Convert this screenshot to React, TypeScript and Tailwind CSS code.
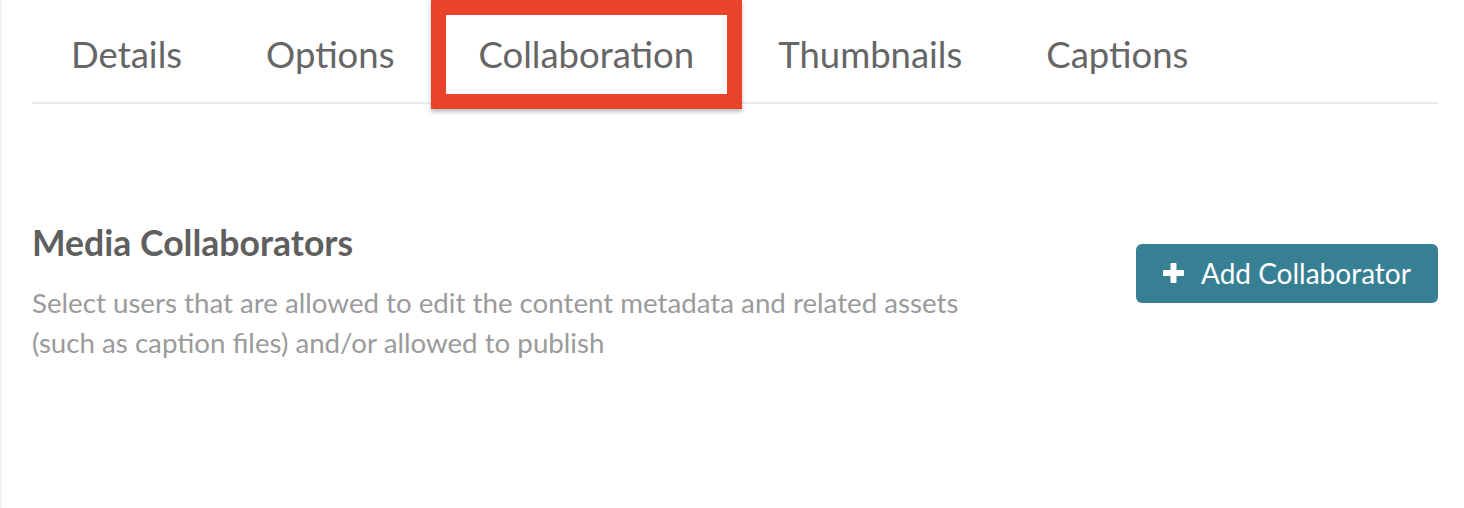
import React from 'react';

const tabs = ['Details', 'Options', 'Collaboration', 'Thumbnails', 'Captions'];

const App: React.FC = () => {
  const active = 'Collaboration';

  return (
    <div className="w-[1464px] h-[508px] bg-white border-l-2 border-[#f4f4f4] pl-[30px] pr-[26px] font-['Lato',sans-serif] overflow-hidden">
      {/* Tabs */}
      <div className="flex gap-[84px] pl-[39px] border-b-2 border-[#ebebeb]">
        {tabs.map((tab) => (
          <div key={tab} className="relative pt-[33px] pb-[25px]">
            <span className="block text-[36.5px] leading-[1.2] text-[#666666] whitespace-nowrap">{tab}</span>
            {tab === active && (
              <div className="absolute left-[-48px] right-[-48px] top-0 h-[109px] border-[15px] border-[#e9432a] shadow-[0_3px_4px_rgba(0,0,0,0.25)]" />
            )}
          </div>
        ))}
      </div>

      {/* Collaborators section */}
      <div className="flex items-start justify-between pt-[118px]">
        <div>
          <h2 className="text-[35.6px] leading-[1.2] font-bold text-[#5f5f5f]">Media Collaborators</h2>
          <p className="mt-[18px] text-[27.7px] leading-[40px] text-[#9b9b9b] w-[960px]">
            Select users that are allowed to edit the content metadata and related assets
            <br />
            (such as caption files) and/or allowed to publish
          </p>
        </div>
        <button className="mt-[22px] flex items-center gap-[17px] h-[59px] w-[302px] pl-[27px] rounded-[6px] bg-[#377f93] text-white text-[28px] leading-none">
          <svg width="21" height="20" viewBox="0 0 21 20" className="shrink-0">
            <rect x="7.5" y="0" width="6" height="20" rx="1" fill="white" />
            <rect x="0" y="7" width="21" height="6" rx="1" fill="white" />
          </svg>
          <span>Add Collaborator</span>
        </button>
      </div>
    </div>
  );
};

export default App;
